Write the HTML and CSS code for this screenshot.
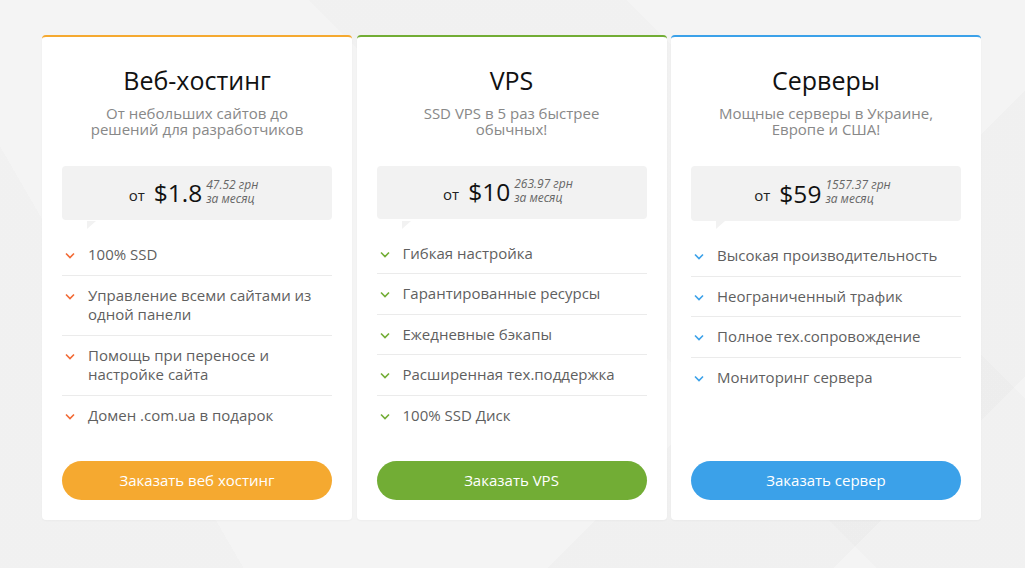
FILE: index.html
```html
<!DOCTYPE html>
<html lang="ru">
<head>
<meta charset="utf-8">
<title>Тарифы</title>
<link rel="stylesheet" href="styles.css">
</head>
<body>
<div class="page">
  <div class="cards">
    <div class="card card-orange">
      <h2 class="title">Веб-хостинг</h2>
      <p class="subtitle">От небольших сайтов до<br>решений для разработчиков</p>
      <div class="price">
        <span class="from">от</span>
        <span class="amount">$1.8</span>
        <span class="note">47.52 грн<br>за месяц</span>
      </div>
      <ul class="features">
        <li><svg class="check" viewBox="0 0 10 7"><path d="M1 1.5 L5 5.5 L9 1.5"/></svg><span>100% SSD</span></li>
        <li><svg class="check" viewBox="0 0 10 7"><path d="M1 1.5 L5 5.5 L9 1.5"/></svg><span>Управление всеми сайтами из одной панели</span></li>
        <li><svg class="check" viewBox="0 0 10 7"><path d="M1 1.5 L5 5.5 L9 1.5"/></svg><span>Помощь при переносе и настройке сайта</span></li>
        <li><svg class="check" viewBox="0 0 10 7"><path d="M1 1.5 L5 5.5 L9 1.5"/></svg><span>Домен .com.ua в подарок</span></li>
      </ul>
      <a class="btn" href="#">Заказать веб хостинг</a>
    </div>
    <div class="card card-green">
      <h2 class="title">VPS</h2>
      <p class="subtitle">SSD VPS в 5 раз быстрее<br>обычных!</p>
      <div class="price">
        <span class="from">от</span>
        <span class="amount">$10</span>
        <span class="note">263.97 грн<br>за месяц</span>
      </div>
      <ul class="features">
        <li><svg class="check" viewBox="0 0 10 7"><path d="M1 1.5 L5 5.5 L9 1.5"/></svg><span>Гибкая настройка</span></li>
        <li><svg class="check" viewBox="0 0 10 7"><path d="M1 1.5 L5 5.5 L9 1.5"/></svg><span>Гарантированные ресурсы</span></li>
        <li><svg class="check" viewBox="0 0 10 7"><path d="M1 1.5 L5 5.5 L9 1.5"/></svg><span>Ежедневные бэкапы</span></li>
        <li><svg class="check" viewBox="0 0 10 7"><path d="M1 1.5 L5 5.5 L9 1.5"/></svg><span>Расширенная тех.поддержка</span></li>
        <li><svg class="check" viewBox="0 0 10 7"><path d="M1 1.5 L5 5.5 L9 1.5"/></svg><span>100% SSD Диск</span></li>
      </ul>
      <a class="btn" href="#">Заказать VPS</a>
    </div>
    <div class="card card-blue">
      <h2 class="title">Серверы</h2>
      <p class="subtitle">Мощные серверы в Украине,<br>Европе и США!</p>
      <div class="price">
        <span class="from">от</span>
        <span class="amount">$59</span>
        <span class="note">1557.37 грн<br>за месяц</span>
      </div>
      <ul class="features">
        <li><svg class="check" viewBox="0 0 10 7"><path d="M1 1.5 L5 5.5 L9 1.5"/></svg><span>Высокая производительность</span></li>
        <li><svg class="check" viewBox="0 0 10 7"><path d="M1 1.5 L5 5.5 L9 1.5"/></svg><span>Неограниченный трафик</span></li>
        <li><svg class="check" viewBox="0 0 10 7"><path d="M1 1.5 L5 5.5 L9 1.5"/></svg><span>Полное тех.сопровождение</span></li>
        <li><svg class="check" viewBox="0 0 10 7"><path d="M1 1.5 L5 5.5 L9 1.5"/></svg><span>Мониторинг сервера</span></li>
      </ul>
      <a class="btn" href="#">Заказать сервер</a>
    </div>
  </div>
</div>
</body>
</html>
```
FILE: styles.css
```css
*{box-sizing:border-box}
html,body{margin:0;height:100%}
body{
  font-family:"Open Sans","Noto Sans",sans-serif;
  background:#f4f4f4;
  background-image:
    linear-gradient(135deg, rgba(0,0,0,0) 70%, rgba(0,0,0,0.014) 70%, rgba(0,0,0,0.014) 88%, rgba(0,0,0,0) 88%),
    linear-gradient(45deg, rgba(0,0,0,0) 55%, rgba(0,0,0,0.01) 55%, rgba(0,0,0,0.01) 75%, rgba(0,0,0,0) 75%),
    linear-gradient(60deg, rgba(0,0,0,0.012) 18%, rgba(0,0,0,0) 18%);
  color:#5f5f5f;
}
.page{padding:35px 0 0 42px}
.cards{display:flex;gap:4.5px;align-items:stretch}
.card{
  width:310px;
  height:485px;
  background:#fff;
  border-radius:4px;
  border-top:2px solid #f5a930;
  padding:25px 20px 20px;
  display:flex;
  flex-direction:column;
  box-shadow:0 1px 2px rgba(0,0,0,0.03);
}
.card-green{border-top-color:#72ad35}
.card-blue{border-top-color:#3ba1e9}
.title{
  margin:0;
  text-align:center;
  font-weight:400;
  font-size:25px;
  line-height:36px;
  color:#111;
}
.subtitle{
  margin:7px 0 0;
  text-align:center;
  font-size:15px;
  line-height:16px;
  color:#888;
}
.price{
  position:relative;
  margin-top:29px;
  height:55px;
  padding-right:7px;
  background:#f2f2f2;
  border-radius:4px;
  display:flex;
  align-items:center;
  justify-content:center;
}
.price::after{
  content:"";
  position:absolute;
  left:25px;
  top:55px;
  width:0;height:0;
  border-top:8px solid #f2f2f2;
  border-right:9px solid transparent;
}
.from{font-size:15px;color:#222;margin-right:9px;margin-top:3px}
.amount{font-size:24.5px;color:#111;line-height:30px;margin-right:4px}
.note{
  font-size:12px;
  line-height:14px;
  font-style:italic;
  color:#666;
  margin-top:-3px;
}
.features{
  list-style:none;
  margin:15px 0 26px;
  padding:0;
}
.features li{
  display:flex;
  align-items:flex-start;
  padding:10px 0;
  border-bottom:1px solid #ebebeb;
  font-size:15px;
  line-height:19.5px;
  color:#5f5f5f;
}
.features li:last-child{border-bottom:0}
.check{
  width:10px;height:7px;
  flex:none;
  margin:7px 13px 0 3px;
  fill:none;
  stroke:#f26a35;
  stroke-width:1.6;
}
.card-green .check{stroke:#72ad35}
.card-blue .check{stroke:#3ba1e9}
.btn{
  margin-top:auto;
  display:block;
  height:39px;
  line-height:39px;
  border-radius:20px;
  background:#f5a930;
  color:#fff;
  text-align:center;
  text-decoration:none;
  font-size:15px;
}
.card-green .btn{background:#72ad35}
.card-blue .btn{background:#3ba1e9}
```
